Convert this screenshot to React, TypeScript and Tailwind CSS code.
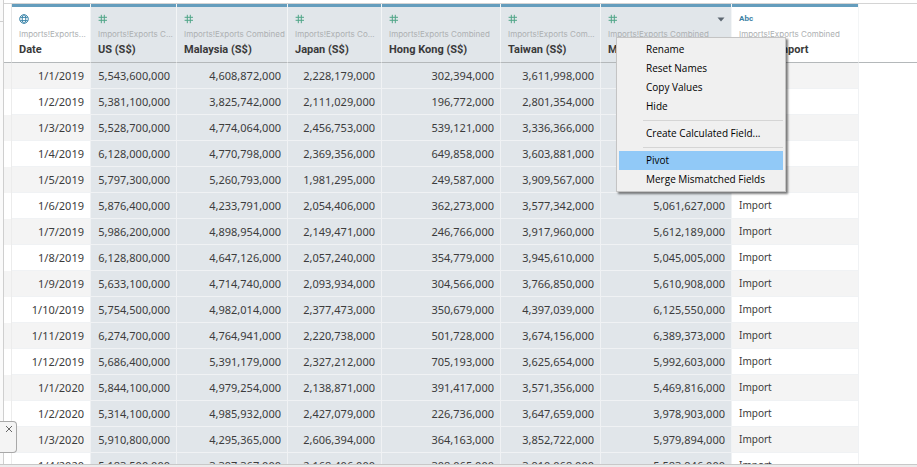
import React from 'react';

type Kind = 'date' | 'number' | 'text';

interface Column {
  name: string;
  source: string;
  kind: Kind;
  width: string;
  selected: boolean;
}

const columns: Column[] = [
  { name: 'Date', source: 'Imports!Exports...', kind: 'date', width: 'w-[79px]', selected: false },
  { name: 'US (S$)', source: 'Imports!Exports C...', kind: 'number', width: 'w-[86px]', selected: true },
  { name: 'Malaysia (S$)', source: 'Imports!Exports Combined', kind: 'number', width: 'w-[111px]', selected: true },
  { name: 'Japan (S$)', source: 'Imports!Exports Co...', kind: 'number', width: 'w-[94px]', selected: true },
  { name: 'Hong Kong (S$)', source: 'Imports!Exports Combined', kind: 'number', width: 'w-[119px]', selected: true },
  { name: 'Taiwan (S$)', source: 'Imports!Exports Com...', kind: 'number', width: 'w-[100px]', selected: true },
  { name: 'M', source: 'Imports!Exports Combined', kind: 'number', width: 'w-[131px]', selected: true },
  { name: 'Export/Import', source: 'Imports!Exports Combined', kind: 'text', width: 'w-[127px]', selected: false },
];

const MENU_COLUMN = 6;

const rows: string[][] = [
  ['1/1/2019', '5,543,600,000', '4,608,872,000', '2,228,179,000', '302,394,000', '3,611,998,000', '', ''],
  ['1/2/2019', '5,381,100,000', '3,825,742,000', '2,111,029,000', '196,772,000', '2,801,354,000', '', ''],
  ['1/3/2019', '5,528,700,000', '4,774,064,000', '2,456,753,000', '539,121,000', '3,336,366,000', '', ''],
  ['1/4/2019', '6,128,000,000', '4,770,798,000', '2,369,356,000', '649,858,000', '3,603,881,000', '', ''],
  ['1/5/2019', '5,797,300,000', '5,260,793,000', '1,981,295,000', '249,587,000', '3,909,567,000', '', ''],
  ['1/6/2019', '5,876,400,000', '4,233,791,000', '2,054,406,000', '362,273,000', '3,577,342,000', '5,061,627,000', 'Import'],
  ['1/7/2019', '5,986,200,000', '4,898,954,000', '2,149,471,000', '246,766,000', '3,917,960,000', '5,612,189,000', 'Import'],
  ['1/8/2019', '6,128,800,000', '4,647,126,000', '2,057,240,000', '354,779,000', '3,945,610,000', '5,045,005,000', 'Import'],
  ['1/9/2019', '5,633,100,000', '4,714,740,000', '2,093,934,000', '304,566,000', '3,766,850,000', '5,610,908,000', 'Import'],
  ['1/10/2019', '5,754,500,000', '4,982,014,000', '2,377,473,000', '350,679,000', '4,397,039,000', '6,125,550,000', 'Import'],
  ['1/11/2019', '6,274,700,000', '4,764,941,000', '2,220,738,000', '501,728,000', '3,674,156,000', '6,389,373,000', 'Import'],
  ['1/12/2019', '5,686,400,000', '5,391,179,000', '2,327,212,000', '705,193,000', '3,625,654,000', '5,992,603,000', 'Import'],
  ['1/1/2020', '5,844,100,000', '4,979,254,000', '2,138,871,000', '391,417,000', '3,571,356,000', '5,469,816,000', 'Import'],
  ['1/2/2020', '5,314,100,000', '4,985,932,000', '2,427,079,000', '226,736,000', '3,647,659,000', '3,978,903,000', 'Import'],
  ['1/3/2020', '5,910,800,000', '4,295,365,000', '2,606,394,000', '364,163,000', '3,852,722,000', '5,979,894,000', 'Import'],
  ['1/4/2020', '5,183,500,000', '3,397,367,000', '2,168,406,000', '308,065,000', '3,910,068,000', '5,583,946,000', 'Import'],
];

const menuGroups: string[][] = [
  ['Rename', 'Reset Names', 'Copy Values', 'Hide'],
  ['Create Calculated Field...'],
  ['Pivot', 'Merge Mismatched Fields'],
];

function TypeIcon({ kind }: { kind: Kind }) {
  if (kind === 'text') {
    return <span className="font-['Roboto',sans-serif] text-[8px] leading-[10px] font-bold text-[#3d7fa3]">Abc</span>;
  }
  if (kind === 'date') {
    return (
      <svg viewBox="0 0 10 10" className="h-[10px] w-[10px]" fill="none" stroke="#3f87ab" strokeWidth="1" aria-hidden="true">
        <circle cx="5" cy="5" r="4.3" />
        <ellipse cx="5" cy="5" rx="1.8" ry="4.3" />
        <path d="M1.2 3.4h7.6M1.2 6.6h7.6" />
      </svg>
    );
  }
  return (
    <svg viewBox="0 0 10 10" className="h-[10px] w-[10px]" fill="none" stroke="#4fa587" strokeWidth="1" aria-hidden="true">
      <path d="M3.3 .8v8.4M6.3 .8v8.4M.6 3.3h8.4M.6 6.3h8.4" />
    </svg>
  );
}

function ContextMenu() {
  return (
    <div
      role="menu"
      className="absolute top-[33px] left-[15px] z-10 w-[170px] border border-[#c4c4c4] bg-[#f0f0f0] px-[2px] py-[2px] shadow-[2px_2px_2px_rgba(0,0,0,0.5)]"
    >
      {menuGroups.map((group, index) => (
        <div key={group[0]} role="group">
          {index > 0 && (
            <div className="flex h-2 items-center pl-6">
              <div className="h-px w-full bg-[#d5d5d5]" />
            </div>
          )}
          {group.map((item) => (
            <button
              key={item}
              type="button"
              role="menuitem"
              className={`block h-[19px] w-full pl-[27px] text-left font-['Open_Sans',sans-serif] text-[10px] leading-[19px] font-normal whitespace-nowrap text-black ${
                item === 'Pivot' ? 'bg-[#91c9f7]' : ''
              }`}
            >
              {item}
            </button>
          ))}
        </div>
      ))}
    </div>
  );
}

function HeaderCell({ column, menuOpen }: { column: Column; menuOpen: boolean }) {
  return (
    <th
      scope="col"
      className={`relative border-r border-b border-r-[#f3f5f6] border-b-[#b4b8ba] p-0 text-left align-top ${
        column.selected ? 'bg-[#e1e6ea]' : 'bg-white'
      }`}
    >
      <div className="h-[3px] bg-[#649dbd]" />
      <div className="flex flex-col pt-[7px] pr-[6px] pl-[7px]">
        <div className="flex h-[10px] items-center justify-between">
          <TypeIcon kind={column.kind} />
          {menuOpen && (
            <button type="button" aria-label="Field options" aria-haspopup="menu" aria-expanded="true">
              <svg viewBox="0 0 8 5" className="h-[5px] w-[8px]" fill="#5c6670" aria-hidden="true">
                <path d="M.5 .5h7L4 4.5z" />
              </svg>
            </button>
          )}
        </div>
        <div className="mt-[4px] font-['Inter',sans-serif] text-[8px] leading-[12px] font-normal whitespace-nowrap text-[#adb0b2]">
          {column.source}
        </div>
        <div className="mt-[3px] font-['Roboto',sans-serif] text-[11px] leading-[14px] font-bold whitespace-nowrap text-[#3a3a3a]">
          {column.name}
        </div>
      </div>
      {menuOpen && <ContextMenu />}
    </th>
  );
}

export default function App() {
  return (
    <div className="flex h-screen flex-col overflow-hidden bg-white font-['Noto_Sans',sans-serif] text-[11px] text-[#3c3c3c]">
      <div className="relative flex min-h-0 flex-1">
        <div className="w-1 shrink-0 border-r border-[#cfcfcf] bg-[#fafafa]">
          <div className="h-[22px] border-b border-[#cfcfcf]" />
        </div>
        <main className="min-w-0 flex-1 overflow-hidden pt-[3px]">
          <div className="h-px bg-[#d4d4d4]" />
          <table className="w-full table-fixed border-separate border-spacing-0">
            <colgroup>
              <col className="w-2" />
              {columns.map((column) => (
                <col key={column.name} className={column.width} />
              ))}
              <col />
            </colgroup>
            <thead>
              <tr className="h-[59px]">
                <td className="border-r border-b border-r-[#e6e6e6] border-b-[#b4b8ba] p-0" />
                {columns.map((column, index) => (
                  <HeaderCell key={column.name} column={column} menuOpen={index === MENU_COLUMN} />
                ))}
                <td className="border-b border-[#b4b8ba] p-0" />
              </tr>
            </thead>
            <tbody>
              {rows.map((row, rowIndex) => {
                const stripe = rowIndex % 2 === 0 ? 'bg-[#f4f4f4]' : 'bg-white';
                return (
                  <tr key={row[0]} className="h-[26px]">
                    <td className={`border-r border-[#ececec] p-0 ${stripe}`} />
                    {row.map((value, index) => (
                      <td
                        key={columns[index].name}
                        className={`border-r border-b border-[#f0f2f4] py-0 pr-[6px] pl-[7px] leading-[25px] whitespace-nowrap ${
                          columns[index].selected ? 'bg-[#e1e6ea]' : stripe
                        } ${columns[index].kind === 'text' ? 'text-left text-[10px]' : 'text-right'}`}
                      >
                        {value}
                      </td>
                    ))}
                    <td className="p-0" />
                  </tr>
                );
              })}
            </tbody>
          </table>
        </main>
        <div className="absolute bottom-[11px] left-0 h-8 w-[17px] rounded-r-sm border border-l-0 border-[#a8a8a8] bg-[#f4f4f4]">
          <button type="button" aria-label="Close" className="mt-[3px] ml-[5px] block">
            <svg viewBox="0 0 8 8" className="h-2 w-2" fill="none" stroke="#666" strokeWidth="1" aria-hidden="true">
              <path d="M1 1l6 6M7 1L1 7" />
            </svg>
          </button>
        </div>
      </div>
      <div className="h-[3px] shrink-0 border-t border-[#c8c8c8] bg-[#ececec]" />
    </div>
  );
}
